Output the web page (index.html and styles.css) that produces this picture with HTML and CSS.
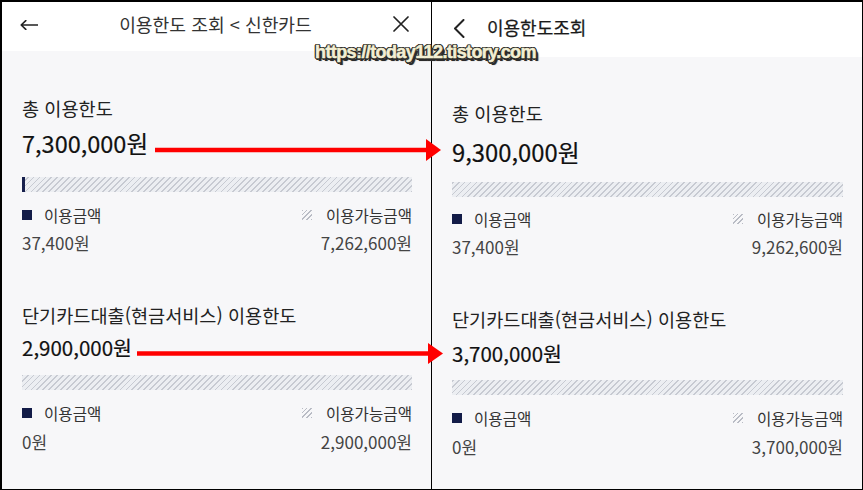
FILE: index.html
```html
<!DOCTYPE html>
<html lang="ko">
<head>
<meta charset="utf-8">
<title>이용한도 조회</title>
<link rel="stylesheet" href="styles.css">
</head>
<body>
<div class="frame">
  <section class="panel panel--web">
    <header class="topbar topbar--web">
      <svg class="icon icon-back" width="18" height="10" viewBox="0 0 18 10"><path d="M17.5 5H1.2M5.8 0.6L1.2 5l4.6 4.4" fill="none" stroke="#222" stroke-width="1.6" stroke-linecap="round" stroke-linejoin="round"/></svg>
      <h1 class="topbar__title">이용한도 조회 &lt; 신한카드</h1>
      <svg class="icon icon-close" width="16" height="16" viewBox="0 0 16 16"><path d="M1 1L15 15M15 1L1 15" fill="none" stroke="#222" stroke-width="1.7" stroke-linecap="round"/></svg>
    </header>
    <main class="content">
      <div class="limit limit--total">
        <p class="limit__label">총 이용한도</p>
        <p class="limit__amount">7,300,000원</p>
        <div class="bar"><span class="bar__used" style="width:3px"></span></div>
        <div class="legend">
          <span class="legend__item"><i class="swatch swatch--used"></i>이용금액</span>
          <span class="legend__item legend__item--avail"><i class="swatch swatch--avail"></i>이용가능금액</span>
        </div>
        <div class="values"><span>37,400원</span><span>7,262,600원</span></div>
      </div>
      <div class="limit limit--cash">
        <p class="limit__label">단기카드대출(현금서비스) 이용한도</p>
        <p class="limit__amount">2,900,000원</p>
        <div class="bar"></div>
        <div class="legend">
          <span class="legend__item"><i class="swatch swatch--used"></i>이용금액</span>
          <span class="legend__item legend__item--avail"><i class="swatch swatch--avail"></i>이용가능금액</span>
        </div>
        <div class="values"><span>0원</span><span>2,900,000원</span></div>
      </div>
    </main>
  </section>
  <div class="divider"></div>
  <section class="panel panel--app">
    <header class="topbar topbar--app">
      <svg class="icon icon-chevron" width="12" height="19" viewBox="0 0 12 19"><path d="M10.5 1L2 9.5l8.5 8.5" fill="none" stroke="#222" stroke-width="2" stroke-linecap="round" stroke-linejoin="round"/></svg>
      <h1 class="topbar__title">이용한도조회</h1>
    </header>
    <main class="content">
      <div class="limit limit--total">
        <p class="limit__label">총 이용한도</p>
        <p class="limit__amount">9,300,000원</p>
        <div class="bar"></div>
        <div class="legend">
          <span class="legend__item"><i class="swatch swatch--used"></i>이용금액</span>
          <span class="legend__item legend__item--avail"><i class="swatch swatch--avail"></i>이용가능금액</span>
        </div>
        <div class="values"><span>37,400원</span><span>9,262,600원</span></div>
      </div>
      <div class="limit limit--cash">
        <p class="limit__label">단기카드대출(현금서비스) 이용한도</p>
        <p class="limit__amount">3,700,000원</p>
        <div class="bar"></div>
        <div class="legend">
          <span class="legend__item"><i class="swatch swatch--used"></i>이용금액</span>
          <span class="legend__item legend__item--avail"><i class="swatch swatch--avail"></i>이용가능금액</span>
        </div>
        <div class="values"><span>0원</span><span>3,700,000원</span></div>
      </div>
    </main>
  </section>

  <svg class="arrows" width="863" height="490" viewBox="0 0 863 490">
    <line x1="155" y1="150" x2="430" y2="150" stroke="#f00" stroke-width="4.5"/>
    <polygon points="426,139 441,150 426,161" fill="#f00"/>
    <line x1="137" y1="353.5" x2="432" y2="353.5" stroke="#f00" stroke-width="4.5"/>
    <polygon points="428,343 443,353.5 428,364" fill="#f00"/>
  </svg>
  <div class="watermark">https://today112.tistory.com</div>
</div>
</body>
</html>
```

FILE: styles.css
```css
* { box-sizing: border-box; }
html, body { margin: 0; padding: 0; background: #fff; }
body {
  font-family: "Noto Sans CJK KR", "Noto Sans", sans-serif;
  color: #222;
}
p { margin: 0; }
h1 { margin: 0; }

.frame {
  position: relative;
  width: 863px;
  height: 490px;
  border-style: solid;
  border-color: #000;
  border-width: 2px 1px 1px 2px;
  display: grid;
  grid-template-columns: 429px 1px 1fr;
  background: #f7f7f9;
  overflow: hidden;
}

.divider { background: #000; }

.panel {
  display: flex;
  flex-direction: column;
  min-width: 0;
  background: #f7f7f9;
}

/* ---------- top bars ---------- */
.topbar {
  background: #fff;
  display: flex;
  align-items: center;
  flex: none;
}
.topbar--web {
  height: 49px;
  padding: 0 22px 0 18px;
  justify-content: space-between;
}
.topbar--web .topbar__title {
  font-size: 18.2px;
  font-weight: 400;
  color: #333;
  line-height: 24px;
  margin-top: -5px;
}
.topbar--web .icon-back { margin-top: -3px; }
.topbar--web .icon-close { margin-top: -5px; }

.topbar--app {
  height: 55px;
  padding: 0 0 0 21px;
  gap: 22px;
}
.topbar--app .icon-chevron { margin-top: -3px; }
.topbar--app .topbar__title {
  font-size: 18px;
  font-weight: 400;
  color: #1a1a1a;
  line-height: 24px;
  margin-top: -6px;
  -webkit-text-stroke: 0.25px #1a1a1a;
}

.icon { display: block; flex: none; }

/* ---------- content ---------- */
.content {
  flex: 1;
  padding: 45px 19px 0 20px;
}
.panel--app .content { padding-top: 44px; }

.limit__label {
  font-size: 18.6px;
  line-height: 24px;
  color: #222;
}
.limit__amount {
  font-size: 23.5px;
  line-height: 30px;
  color: #111;
  margin-top: 8px;
  -webkit-text-stroke: 0.2px #111;
}
.limit--cash .limit__amount {
  font-size: 20.5px;
  line-height: 28px;
  margin-top: 6px;
}

.bar {
  height: 15px;
  margin-top: 19px;
  background-color: #eceef2;
  background-image: repeating-linear-gradient(-45deg, #c7cad2 0 1.3px, #eceef2 1.3px 4.2px);
  display: flex;
}
.limit--cash .bar { margin-top: 14px; }
.bar__used { display: block; height: 100%; background: #17204d; }

.legend {
  display: flex;
  justify-content: space-between;
  align-items: center;
  margin-top: 13px;
  font-size: 15.6px;
  line-height: 20px;
  color: #333;
}
.legend__item { display: flex; align-items: center; gap: 12px; }
.legend__item--avail { gap: 14px; }

.swatch { display: block; width: 10px; height: 10px; }
.swatch--used { background: #131c48; }
.swatch--avail {
  background-image: repeating-linear-gradient(-45deg, #b9bcc5 0 1.4px, transparent 1.4px 3.3px);
}

.values {
  display: flex;
  justify-content: space-between;
  margin-top: 7px;
  font-size: 17px;
  line-height: 22px;
  color: #444;
}
.limit--cash .values { margin-top: 8px; }

.limit--cash { margin-top: 49px; }

/* right panel spacing */
.panel--app .limit--total .limit__amount { margin-top: 12px; font-size: 23.8px; }
.panel--app .limit--total .bar { margin-top: 15px; }
.panel--app .limit--total .legend { margin-top: 12px; }
.panel--app .limit--cash .limit__amount { margin-top: 8px; }
.panel--app .limit--cash .bar { margin-top: 13px; }

/* ---------- overlays ---------- */
.arrows {
  position: absolute;
  left: -2px;
  top: -2px;
  pointer-events: none;
}

.watermark {
  position: absolute;
  left: 313px;
  top: 39px;
  font-family: "Liberation Sans", Arial, sans-serif;
  font-weight: 700;
  font-size: 18px;
  line-height: 22px;
  letter-spacing: -0.6px;
  color: #f3efd3;
  -webkit-text-stroke: 0.5px #f3efd3;
  white-space: nowrap;
  text-shadow:
    -1.5px 0 0 #2b2b2b, 1.5px 0 0 #2b2b2b, 0 -1.5px 0 #2b2b2b, 0 1.5px 0 #2b2b2b,
    -1px -1px 0 #2b2b2b, 1px -1px 0 #2b2b2b, -1px 1px 0 #2b2b2b, 1px 1px 0 #2b2b2b,
    2.5px 2.5px 0 #2b2b2b, 3px 3px 1px #7a7a7a;
}
```
